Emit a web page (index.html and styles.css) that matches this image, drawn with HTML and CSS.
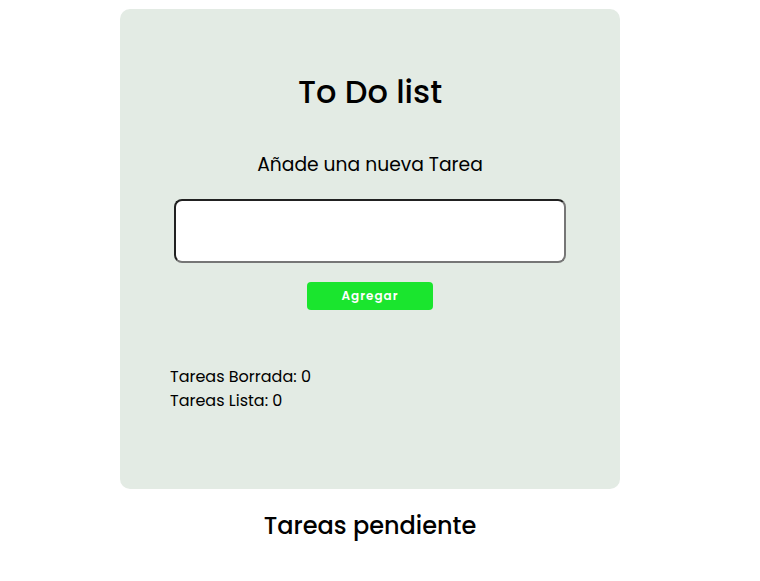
FILE: index.html
```html
<!DOCTYPE html>
<html lang="es">
<head>
<meta charset="utf-8">
<title>To Do list</title>
<link rel="stylesheet" href="styles.css">
</head>
<body>
<main class="page">
  <section class="card">
    <h1 class="title">To Do list</h1>
    <p class="subtitle">Añade una nueva Tarea</p>
    <div class="form">
      <input class="task-input" type="text">
      <button class="add-btn" type="button">Agregar</button>
    </div>
    <div class="stats">
      <p class="stat">Tareas Borrada: 0</p>
      <p class="stat">Tareas Lista: 0</p>
    </div>
  </section>
  <h2 class="pending">Tareas pendiente</h2>
</main>
</body>
</html>
```
FILE: styles.css
```css
* { box-sizing: border-box; }
html, body { margin: 0; padding: 0; background: #ffffff; }
body {
  font-family: Poppins, "Open Sans", "Liberation Sans", sans-serif;
  color: #000;
}
.page {
  width: 740px;
  padding-top: 9px;
  display: flex;
  flex-direction: column;
  align-items: center;
}
.card {
  width: 500px;
  height: 480px;
  background: #e3ebe4;
  border-radius: 10px;
  padding: 59px 50px 0;
  display: flex;
  flex-direction: column;
}
.title {
  margin: 0;
  font-size: 32px;
  font-weight: 500;
  line-height: 48px;
  text-align: center;
}
.subtitle {
  margin: 35px 0 0;
  font-size: 18.72px;
  font-weight: 400;
  line-height: 28px;
  text-align: center;
}
.form {
  margin-top: 20px;
  display: flex;
  flex-direction: column;
  align-items: center;
  gap: 19px;
}
.task-input {
  width: 392px;
  height: 64px;
  border-width: 2px;
  border-style: inset;
  border-color: #767676;
  border-radius: 8px;
  background: #fff;
  margin: 0;
}
.add-btn {
  width: 126px;
  height: 28px;
  border: none;
  border-radius: 4px;
  background: #1ae52e;
  color: #fff;
  font-family: inherit;
  font-size: 12px;
  font-weight: 600;
  letter-spacing: 1px;
  cursor: pointer;
}
.stats {
  margin-top: 55px;
}
.stat {
  margin: 0;
  font-size: 16px;
  line-height: 24px;
}
.pending {
  margin: 19px 0 0;
  font-size: 24px;
  font-weight: 500;
  line-height: 36px;
  text-align: center;
}
```
